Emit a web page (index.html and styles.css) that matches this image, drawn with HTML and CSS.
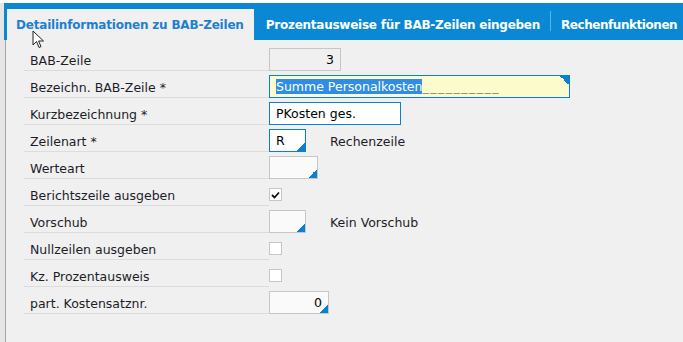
FILE: index.html
```html
<!DOCTYPE html>
<html lang="de">
<head>
    <meta charset="UTF-8">
    <title>BAB-Zeile</title>
    <link rel="stylesheet" href="styles.css">
</head>
<body>
    <div class="window">
        <div class="panel">
            <div class="tabs">
                <div class="tab active">Detailinformationen zu BAB-Zeilen</div>
                <div class="tab second">Prozentausweise für BAB-Zeilen eingeben</div>
                <div class="tab-sep"></div>
                <div class="tab third">Rechenfunktionen</div>
            </div>

            <div class="form">
                <div class="row">
                    <div class="label">BAB-Zeile</div>
                    <div class="field"><div class="box readonly w-72 num">3</div></div>
                </div>
                <div class="row">
                    <div class="label">Bezeichn. BAB-Zeile *</div>
                    <div class="field">
                        <div class="box focus w-300 corner-top"><span class="sel">Summe Personalkosten</span><span class="fill">__________</span></div>
                    </div>
                </div>
                <div class="row">
                    <div class="label">Kurzbezeichnung *</div>
                    <div class="field"><div class="box edit w-132">PKosten ges.</div></div>
                </div>
                <div class="row">
                    <div class="label">Zeilenart *</div>
                    <div class="field">
                        <div class="box edit w-36 corner">R</div>
                        <span class="hint">Rechenzeile</span>
                    </div>
                </div>
                <div class="row">
                    <div class="label">Werteart</div>
                    <div class="field"><div class="box w-48 corner"></div></div>
                </div>
                <div class="row">
                    <div class="label">Berichtszeile ausgeben</div>
                    <div class="field">
                        <div class="check">
                            <svg width="9" height="8" viewBox="0 0 9 8"><path d="M1 4 L3.5 6.5 L8 1.5" fill="none" stroke="#111" stroke-width="1.8"/></svg>
                        </div>
                    </div>
                </div>
                <div class="row">
                    <div class="label">Vorschub</div>
                    <div class="field">
                        <div class="box w-36 corner"></div>
                        <span class="hint">Kein Vorschub</span>
                    </div>
                </div>
                <div class="row">
                    <div class="label">Nullzeilen ausgeben</div>
                    <div class="field"><div class="check"></div></div>
                </div>
                <div class="row">
                    <div class="label">Kz. Prozentausweis</div>
                    <div class="field"><div class="check"></div></div>
                </div>
                <div class="row">
                    <div class="label">part. Kostensatznr.</div>
                    <div class="field"><div class="box w-59 num corner">0</div></div>
                </div>
            </div>
        </div>

        <svg class="cursor" width="14" height="20" viewBox="0 0 14 20">
            <path d="M1 1 L1 15 L4.5 11.5 L7 17.5 L9 16.6 L6.6 11 L11.5 11 Z" fill="#fff" stroke="#222" stroke-width="1"/>
        </svg>
    </div>
</body>
</html>
```

FILE: styles.css
```css
body {
    margin: 0;
    background-color: #fff;
    font-family: "DejaVu Sans", Verdana, sans-serif;
    font-size: 12.5px;
    color: #1c1c28;
}
.window {
    position: relative;
    margin-top: 3px;
    height: 339px;
    background-color: #e6e6e6;
    padding-left: 5px;
    overflow: hidden;
}
.panel {
    height: 100%;
    background-color: #f0f0f0;
    border-left: 1px solid #a4a4a4;
}

/* tab strip */
.tabs {
    height: 37px;
    margin-left: -2px;
    padding-left: 3px;
    background-color: #0a88d3;
    display: flex;
    align-items: flex-end;
    white-space: nowrap;
}
.tab {
    flex-shrink: 0;
    height: 31px;
    padding: 0 11px;
    display: flex;
    align-items: center;
    color: #fff;
    font-weight: bold;
    font-size: 12px;
    letter-spacing: -0.2px;
}
.tab.active {
    background-color: #f0f0f0;
    color: #1f80d2;
    padding: 0 10px 0 9px;
}
.tab.second {
    padding: 0 10px 0 12px;
    letter-spacing: -0.25px;
}
.tab.third {
    padding-left: 10px;
    letter-spacing: -0.45px;
}
.tab-sep {
    flex-shrink: 0;
    width: 1px;
    height: 20px;
    margin-bottom: 9px;
    background-color: #5fb1e4;
}

/* form rows */
.form {
    padding-top: 4px;
    padding-left: 18px;
}
.row {
    display: flex;
    height: 27px;
}
.label {
    width: 245px;
    height: 27px;
    box-sizing: border-box;
    padding-left: 6px;
    padding-top: 6px;
    border-bottom: 1px solid #dcdcdc;
    display: flex;
    align-items: center;
}
.field {
    display: flex;
    align-items: flex-end;
}
.hint {
    margin-left: 24px;
    align-self: center;
    padding-top: 5px;
}

/* input boxes */
.box {
    position: relative;
    height: 23px;
    box-sizing: border-box;
    border: 1px solid #c6c6c6;
    background-color: #fafafa;
    padding: 0 6px;
    line-height: 21px;
    color: #000;
    white-space: nowrap;
    overflow: hidden;
}
.box.readonly {
    background-color: #f0f0f0;
}
.box.edit {
    border-color: #0b7fd0;
    background-color: #fff;
}
.box.focus {
    border-color: #0b7fd0;
    background-color: #fbfbcb;
}
.box.num {
    text-align: right;
}
.box.corner::after,
.box.corner-top::after {
    content: "";
    position: absolute;
    right: 0;
    width: 9px;
    height: 9px;
}
.box.corner::after {
    bottom: 0;
    background: linear-gradient(to top left, #0b7fd0 50%, transparent 50%);
}
.box.corner-top::after {
    top: 0;
    background: linear-gradient(to bottom left, #0b7fd0 50%, transparent 50%);
}
.sel {
    background-color: #2f8de4;
    color: #fff;
}
.fill {
    color: #8a8a8a;
    letter-spacing: 1.5px;
}
.w-72 { width: 72px; }
.w-300 { width: 301px; }
.w-132 { width: 132px; }
.w-36 { width: 37px; }
.w-48 { width: 49px; }
.w-59 { width: 60px; }

.check {
    width: 13px;
    height: 13px;
    box-sizing: border-box;
    border: 1px solid #c6c6c6;
    background-color: #fff;
    margin-bottom: 5px;
    display: flex;
    align-items: center;
    justify-content: center;
}

.cursor {
    position: absolute;
    left: 32px;
    top: 27px;
}
```
